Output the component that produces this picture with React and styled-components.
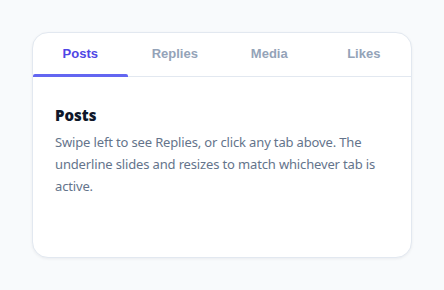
import React, { useState } from "react";
import styled, { createGlobalStyle } from "styled-components";

const Global = createGlobalStyle`
  body {
    margin: 0;
    background: #f8fafc;
    font-family: "Noto Sans", sans-serif;
  }
`;

const Page = styled.div`
  padding: 32px;
`;

const Card = styled.div`
  width: 380px;
  box-sizing: border-box;
  background: #ffffff;
  border: 1px solid #e2e8f0;
  border-radius: 16px;
  box-shadow: 0 1px 3px rgba(15, 23, 42, 0.06);
  overflow: hidden;
`;

const TabBar = styled.div`
  position: relative;
  display: grid;
  grid-template-columns: repeat(4, 1fr);
  height: 43px;
  border-bottom: 1px solid #e2e8f0;
`;

const Tab = styled.button`
  border: none;
  background: none;
  padding: 0 0 2px;
  font-family: "Liberation Sans", Arial, sans-serif;
  font-weight: bold;
  font-size: 13px;
  color: ${(p) => (p.$active ? "#4f46e5" : "#94a3b8")};
  cursor: pointer;
`;

const Underline = styled.div`
  position: absolute;
  bottom: -1px;
  height: 3px;
  border-radius: 2px 2px 0 0;
  background: #6366f1;
  transition: left 0.25s, width 0.25s;
`;

const Body = styled.div`
  padding: 29px 22px 0;
  height: 180px;
  box-sizing: border-box;
`;

const Title = styled.h3`
  margin: 0 0 7px;
  font-size: 15px;
  font-weight: 900;
  color: #0f172a;
  line-height: 18px;
`;

const Text = styled.p`
  margin: 0;
  font-size: 13px;
  line-height: 22px;
  letter-spacing: -0.15px;
  color: #64748b;
`;

const tabs = ["Posts", "Replies", "Media", "Likes"];

export default function App() {
  const [active, setActive] = useState(0);
  const w = 378 / tabs.length;
  return (
    <Page>
      <Global />
      <Card>
        <TabBar>
          {tabs.map((t, i) => (
            <Tab key={t} $active={i === active} onClick={() => setActive(i)}>
              {t}
            </Tab>
          ))}
          <Underline style={{ left: active * w, width: w }} />
        </TabBar>
        <Body>
          <Title>{tabs[active]}</Title>
          <Text>
            Swipe left to see Replies, or click any tab above. The underline
            slides and resizes to match whichever tab is active.
          </Text>
        </Body>
      </Card>
    </Page>
  );
}
